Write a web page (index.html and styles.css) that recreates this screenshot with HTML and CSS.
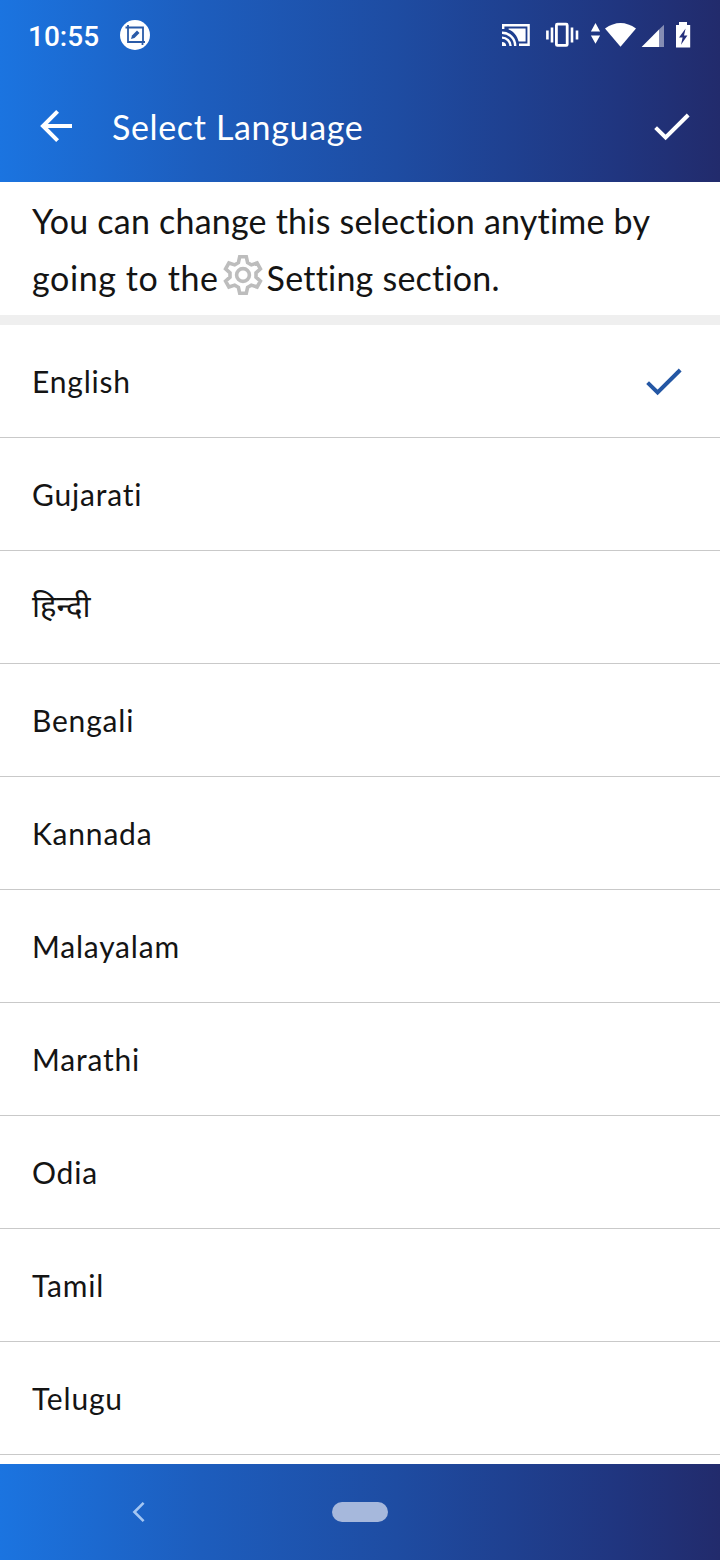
FILE: index.html
```html
<!DOCTYPE html>
<html lang="en">
	<head>
		<meta charset="UTF-8">
		<title>Select Language</title>
		<link rel="stylesheet" href="styles.css">
	</head>
	<body>
		<div class="header">
			<div class="status">
				<span class="time">10:55</span>
				<svg class="shot" width="30" height="30" viewBox="0 0 30 30">
					<circle cx="15" cy="15" r="15" fill="#fff"/>
					<path d="M5.5 7.5H23V21M8 5V22H25M22.5 22v3" fill="none" stroke="#2a5ba8" stroke-width="1.8"/>
					<path d="M11 19l1-3.5 5-5 2.5 2.5-5 5z" fill="#2a5ba8"/>
				</svg>
				<svg class="icons" width="192" height="30" viewBox="0 0 192 30">
					<g fill="none" stroke="#fff" stroke-width="2.4">
						<path d="M3.2 9V5.2H28.6V24.8H19"/>
						<path d="M2 12.8a13 13 0 0 1 13.2 13.2M2 17.6a8.6 8.6 0 0 1 8.6 8.4"/>
						<rect x="56.4" y="4.2" width="10.8" height="21.2" rx="1" stroke-width="2.8"/>
						<path d="M52 7.6V22.6M72 7.6V22.6M47.4 10.4V19.6M77 10.4V19.6" stroke-width="2.6"/>
					</g>
					<g fill="#fff">
						<path d="M2 22a4.2 4.2 0 0 1 4.2 4H2z"/>
						<path d="M8.6 8.4H25.6V21.6H18.6C17 15.5 13.6 11.6 8.6 9.6z"/>
						<path d="M95.5 3l4.6 8.4h-9.2zM95.5 23.8l4.6-8.4h-9.2z"/>
						<path d="M105 8.6Q120.5-2.4 136 8.6L120.5 26.8z"/>
						<path d="M141.6 27L159 9.6V27z"/>
						<path d="M159 9.6L164 4.8V27H159z" opacity=".45"/>
						<path d="M179 2h8v3h3.2v22.6H176V5h3z"/>
					</g>
					<path d="M185.6 8.4L179 17.4h3.6l-1.6 7.4 6.4-9.4h-3.4z" fill="#26317c"/>
				</svg>
			</div>
			<div class="bar">
				<svg width="34" height="34" viewBox="0 0 34 34" fill="none" stroke="#fff" stroke-width="4">
					<path d="M33 17H4M18.6 2.4L4 17L18.6 31.6"/>
				</svg>
				<h1>Select Language</h1>
				<svg class="done" width="36" height="28" viewBox="0 0 36 28" fill="none" stroke="#fff" stroke-width="4">
					<path d="M1.6 14.6L11.6 24.4L34.2 2"/>
				</svg>
			</div>
		</div>
		<div class="intro">
			<p class="line1">You can change this selection anytime by</p>
			<p class="line2">
				<span class="going">going to the</span>
				<svg width="40" height="42" viewBox="0 0 40 42" fill="none" stroke="#bdbdbd" stroke-width="3.6">
					<path d="M15.4 8.7L16.7 2.8H23.3L24.6 8.7L28.3 10.9L34.1 9L37.4 14.8L33 18.8V23.2L37.4 27.2L34.1 33L28.3 31.1L24.6 33.3L23.3 39.2H16.7L15.4 33.3L11.7 31.1L5.9 33L2.6 27.2L7 23.2V18.8L2.6 14.8L5.9 9L11.7 10.9Z"/>
					<circle cx="20" cy="21" r="6.4"/>
				</svg>
				<span>Setting section.</span>
			</p>
		</div>
		<ul class="list">
			<li class="item">
				<span>English</span>
				<svg width="36" height="28" viewBox="0 0 36 28" fill="none" stroke="#2457a4" stroke-width="4">
					<path d="M1.6 14.6L11.6 24.4L34.2 2"/>
				</svg>
			</li>
			<li class="item">Gujarati</li>
			<li class="item hindi">हिन्दी</li>
			<li class="item">Bengali</li>
			<li class="item">Kannada</li>
			<li class="item">Malayalam</li>
			<li class="item">Marathi</li>
			<li class="item">Odia</li>
			<li class="item">Tamil</li>
			<li class="item">Telugu</li>
		</ul>
		<div class="nav">
			<svg width="14" height="22" viewBox="0 0 14 22" fill="none" stroke="#a4c6f2" stroke-width="2.6">
				<path d="M11.6 1.8L2.4 11L11.6 20.2"/>
			</svg>
			<span class="home"></span>
		</div>
	</body>
</html>
```
FILE: styles.css
```css
*{
	margin: 0;
	padding: 0;
	list-style: none;
	box-sizing: border-box;
}
body{
	width: 720px;
	height: 1560px;
	display: flex;
	flex-direction: column;
	overflow: hidden;
	background: #fff;
	color: #141414;
	font-family: Lato, "Noto Sans", sans-serif;
	font-variant-ligatures: none;
}
svg{
	display: block;
	flex: none;
}
.header,.nav{
	flex: none;
	background: linear-gradient(to right, #1b74e0 0%, #1d5dbd 28%, #1e4ca2 55%, #20357f 86%, #222b6c 100%);
}
.header{
	height: 182px;
	color: #fff;
}
.status{
	height: 72px;
	padding: 0 28px;
	display: flex;
	align-items: center;
}
.time{
	width: 92px;
	font: 500 28px Roboto, sans-serif;
}
.shot{
	margin-top: -2px;
}
.icons{
	margin: -2px 0 0 auto;
}
.bar{
	height: 108px;
	padding: 0 30px 0 39px;
	display: flex;
	align-items: center;
}
h1{
	margin: 1px 0 0 39px;
	font-size: 34px;
	font-weight: 400;
	letter-spacing: 0.65px;
}
.done{
	margin: 2px 0 0 auto;
}
.intro{
	height: 143px;
	padding: 10px 32px 0;
	border-bottom: 10px solid #efefef;
	font-size: 34px;
	line-height: 57px;
	letter-spacing: 0.22px;
	white-space: nowrap;
}
.line2{
	display: flex;
}
.line2 svg{
	margin: 5px 4px 0;
}
.going{
	letter-spacing: 0.6px;
}
.list{
	flex: 1;
}
.item{
	height: 113px;
	padding: 0 38px 0 32px;
	border-bottom: 1px solid #c9c9c9;
	display: flex;
	justify-content: space-between;
	align-items: center;
	font-size: 30px;
	letter-spacing: 0.8px;
}
.item svg{
	margin-top: 1px;
}
.hindi{
	padding-bottom: 4px;
	font-size: 31px;
	letter-spacing: 0;
}
.nav{
	height: 96px;
	padding-left: 132px;
	display: flex;
	align-items: center;
}
.home{
	width: 56px;
	height: 20px;
	margin-left: 186px;
	border-radius: 10px;
	background: #a6b8dc;
}
```
